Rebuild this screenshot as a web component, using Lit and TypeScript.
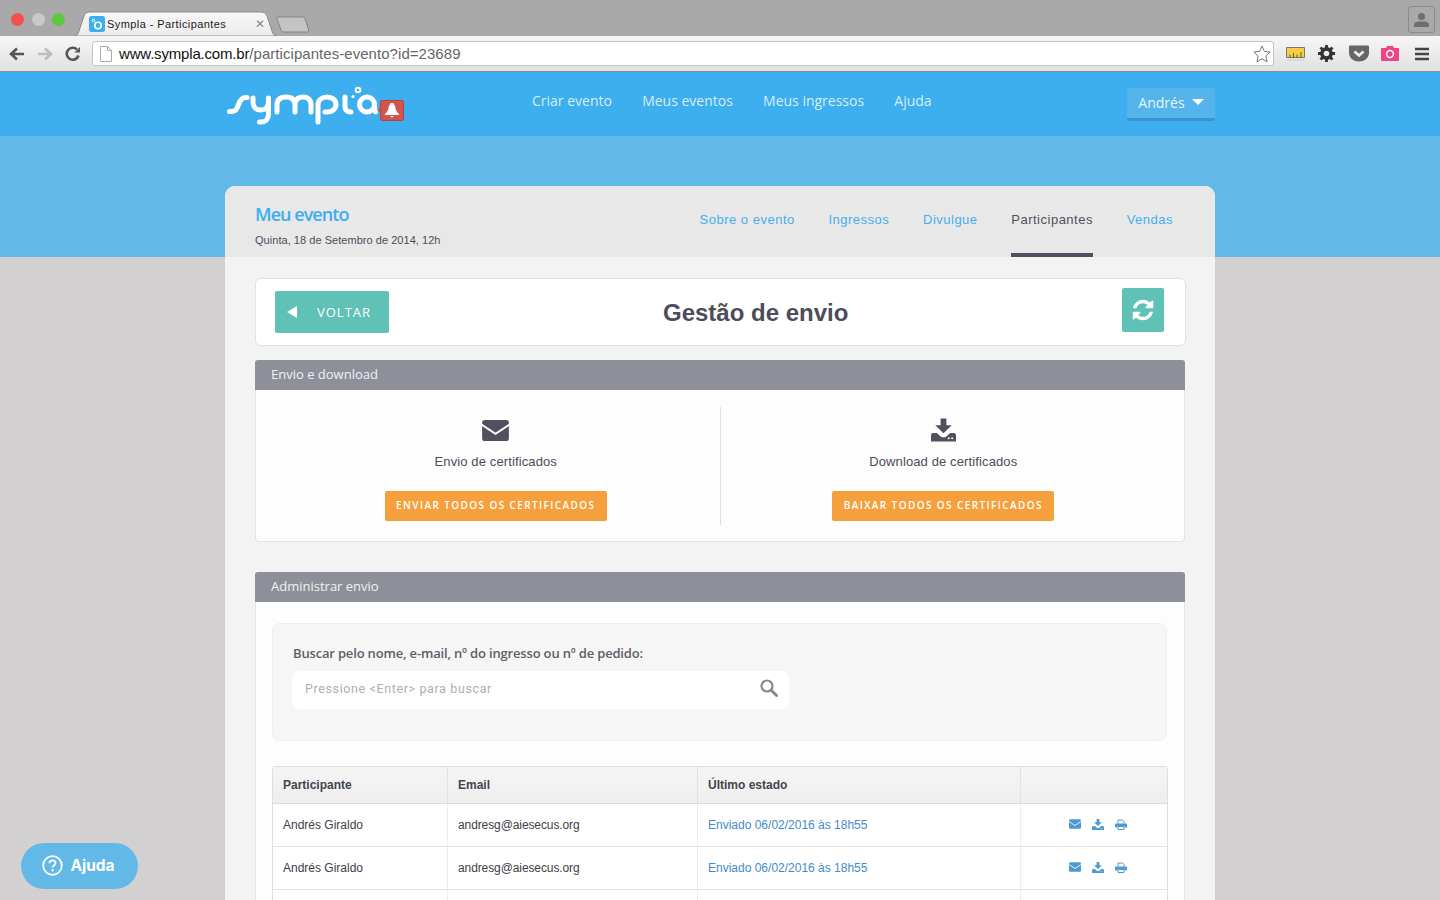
import { LitElement, html, css } from "lit";
import { customElement } from "lit/decorators.js";

const refreshD = "M1639 1056q0 5-1 7-64 268-268 434.5t-478 166.5q-146 0-282.5-55t-243.5-157l-129 129q-19 19-45 19t-45-19-19-45v-448q0-26 19-45t45-19h448q26 0 45 19t19 45-19 45l-137 137q71 66 161 102t187 36q134 0 250-65t186-179q11-17 53-117 8-23 30-23h192q13 0 22.5 9.5t9.5 22.5zm25-800v448q0 26-19 45t-45 19h-448q-26 0-45-19t-19-45 19-45l138-138q-148-137-349-137-134 0-250 65t-186 179q-11 17-53 117-8 23-30 23h-199q-13 0-22.5-9.5t-9.5-22.5v-7q65-268 270-434.5t480-166.5q146 0 284 55.5t245 156.5l130-129q19-19 45-19t45 19 19 45z";

const mail = (w: number, h: number, c: string) => html`<svg width=${w} height=${h} viewBox="0 0 28 22" aria-hidden="true">
  <rect x="0" y="0" width="28" height="22" rx="3" fill=${c}></rect>
  <path d="M-1 4.500 L14 14.500 L29 4.500" fill="none" stroke="#fff" stroke-width="2"></path></svg>`;

const download = (w: number, h: number, c: string) => html`<svg width=${w} height=${h} viewBox="0 0 26 24" aria-hidden="true">
  <path d="M10 0h6v7h5.500L13 15.500 4.500 7H10z" fill=${c}></path>
  <path d="M0 17.500q0-2 2-2.500h4l5 4.500h4l5-4.500h4q2 .5 2 2.500V24H0z" fill=${c}></path>
  <circle cx="18.500" cy="20.500" r="1" fill="#fff"></circle><circle cx="22" cy="20.500" r="1" fill="#fff"></circle></svg>`;

const printer = (w: number, h: number, c: string) => html`<svg width=${w} height=${h} viewBox="0 0 24 22" aria-hidden="true">
  <path d="M6 9V2h9l3 3v4" fill="none" stroke=${c} stroke-width="2"></path>
  <path d="M2 9h20q2 0 2 2v6h-5v-3H5v3H0v-6q0-2 2-2z" fill=${c}></path>
  <path d="M6 15h12v6H6z" fill="none" stroke=${c} stroke-width="2"></path></svg>`;

@customElement("browser-chrome")
class BrowserChrome extends LitElement {
  static styles = css`
    :host { display: block; font-family: "Liberation Sans", sans-serif; }
    .strip { height: 36px; background: #a9a9a9; display: flex; align-items: flex-end; position: relative; }
    .lights { position: absolute; left: 11px; top: 12.500px; display: flex; gap: 7.500px; }
    .light { width: 13px; height: 13px; border-radius: 50%; }
    .red { background: #f2504c; } .grey { background: #c9c9c9; } .green { background: #5cc83f; }
    .tab { margin-left: 74px; width: 206px; height: 25px; position: relative; display: flex; align-items: center; padding-left: 15px; box-sizing: border-box; }
    .tab-bg { position: absolute; left: 0; top: 0; }
    .fav, .tab-title, .tab-x { position: relative; }
    .fav { width: 16px; height: 16px; margin-right: 2px; }
    .tab-title { font-size: 11px; letter-spacing: .42px; color: #1b1b1b; width: 148px; white-space: nowrap; }
    .tab-x { font-size: 12px; color: #8a8a8a; line-height: 1; }
    .newtab { margin-left: -4px; margin-bottom: 3px; }
    .profile { position: absolute; right: 5px; top: 6px; width: 25px; height: 25px; border: 1px solid #8b8b8b; border-radius: 3px; display: flex; align-items: center; justify-content: center; }
    .bar { height: 35px; background: linear-gradient(#f6f6f6, #e1e1e1); border-bottom: 1px solid #8e8e8e; display: flex; align-items: center; box-sizing: content-box; }
    .navs { width: 92px; display: flex; flex: none; gap: 12px; padding-left: 9px; box-sizing: border-box; align-items: center; }
    .addr { flex: none; width: 1182px; height: 25px; box-sizing: border-box; background: #fff; border: 1px solid #c4c4c4; border-radius: 3px; display: flex; align-items: center; padding: 0 2px 0 7px; }
    .url { margin-left: 7px; flex: 1; font-size: 15px; letter-spacing: .05px; color: #666; white-space: nowrap; }
    .url b { font-weight: 400; color: #111; letter-spacing: -.18px; }
    .exts { display: flex; align-items: center; margin-left: 11.500px; gap: 12.500px; }
    .menu { margin-left: 3px; }
  `;
  render() {
    return html`
      <div class="strip">
        <div class="lights"><i class="light red"></i><i class="light grey"></i><i class="light green"></i></div>
        <div class="tab">
          <svg class="tab-bg" width="206" height="25" viewBox="0 0 206 25" aria-hidden="true">
            <defs><linearGradient id="tg" x1="0" y1="0" x2="0" y2="1"><stop offset="0" stop-color="#f8f8f8"/><stop offset="1" stop-color="#ececec"/></linearGradient></defs>
            <path d="M0 25c3 0 4-2 5-5l5-15c1-3 3-4 6-4h171c3 0 5 1 6 4l5 15c1 3 2 5 5 5z" fill="url(#tg)" stroke="#8c8c8c" stroke-width="1"></path>
          </svg>
          <svg class="fav" viewBox="0 0 16 16" aria-hidden="true">
            <rect width="16" height="16" rx="2.500" fill="#3daeee"></rect>
            <circle cx="9" cy="9.500" r="3.200" fill="none" stroke="#fff" stroke-width="1.600"></circle>
            <circle cx="4.500" cy="4.500" r="1.300" fill="none" stroke="#fff" stroke-width="1"></circle>
          </svg>
          <span class="tab-title">Sympla - Participantes</span>
          <span class="tab-x">✕</span>
        </div>
        <svg class="newtab" width="34" height="17" viewBox="0 0 34 17" aria-hidden="true">
          <path d="M2 1h24c1.500 0 2.500.5 3 2l3.500 10c.5 1.500 0 3-2 3H8c-1.500 0-2.500-.5-3-2L1 3C.5 1.500 1 1 2 1z" fill="#c4c4c4" stroke="#838383"></path>
        </svg>
        <div class="profile">
          <svg width="15" height="14" viewBox="0 0 15 14" aria-hidden="true"><circle cx="7.500" cy="3.500" r="3.500" fill="#6e6e6e"></circle><path d="M0 14v-2q0-3 4-3.500h7q4 .5 4 3.500v2z" fill="#6e6e6e"></path></svg>
        </div>
      </div>
      <div class="bar">
        <div class="navs">
          <svg width="16" height="14" viewBox="0 0 16 14" aria-hidden="true"><path d="M15 7H3M8 1.500 2 7l6 5.500" fill="none" stroke="#555" stroke-width="2.600"></path></svg>
          <svg width="16" height="14" viewBox="0 0 16 14" aria-hidden="true"><path d="M1 7h12M8 1.500 14 7l-6 5.500" fill="none" stroke="#bcbcbc" stroke-width="2.600"></path></svg>
          <svg width="16" height="16" viewBox="0 0 16 16" aria-hidden="true"><path d="M13.500 9.500A6 6 0 1 1 12 3.500" fill="none" stroke="#555" stroke-width="2.600"></path><path d="M9.500 6.500H15V1z" fill="#555"></path></svg>
        </div>
        <div class="addr">
          <svg width="12" height="16" viewBox="0 0 12 16" aria-hidden="true"><path d="M.5.500h7l4 4v11H.5z" fill="#fff" stroke="#aaa"></path><path d="M7.500.500v4h4" fill="none" stroke="#aaa"></path></svg>
          <span class="url"><b>www.sympla.com.br</b>/participantes-evento?id=23689</span>
          <svg width="18" height="18" viewBox="0 0 18 18" aria-hidden="true"><path d="M9 1l2.400 5.400 5.800.6-4.300 3.900 1.200 5.800L9 13.800l-5.100 2.900 1.200-5.800L.8 7l5.800-.6z" fill="#fff" stroke="#777" stroke-width="1"></path></svg>
        </div>
        <div class="exts">
          <svg width="19" height="14" viewBox="0 0 19 14" aria-hidden="true"><path d="M.5.500h18v10H.5z" fill="#f7cf45" stroke="#777"></path><path d="M4 11V7.500M7.500 11V6M11 11V7.500M15 11V5" stroke="#6b5a20" stroke-width="1"></path><path d="M1 13h17" stroke="#ccc"></path></svg>
          <svg width="19" height="19" viewBox="0 0 19 19" aria-hidden="true"><circle cx="9.500" cy="9.500" r="4.600" fill="none" stroke="#333" stroke-width="3.600"></circle><path d="M9.500 1v17M1 9.500h17M3.500 3.500l12 12M15.500 3.500l-12 12" stroke="#333" stroke-width="2.800" stroke-dasharray="3 11 3 3"></path></svg>
          <svg width="20" height="17" viewBox="0 0 20 17" aria-hidden="true"><path d="M1 .5h18q1 0 1 1V8c0 5-5 8.500-10 8.500S0 13 0 8V1.500q0-1 1-1z" fill="#666"></path><path d="M5.500 6.500 10 10.500l4.500-4" fill="none" stroke="#eee" stroke-width="2.600"></path></svg>
          <svg width="18" height="15" viewBox="0 0 18 15" aria-hidden="true"><path d="M0 2h5l1-2h6l1 2h5v13H0z" fill="#f04488"></path><circle cx="9" cy="8" r="3.400" fill="none" stroke="#fff" stroke-width="1.500"></circle></svg>
          <svg class="menu" width="14" height="14" viewBox="0 0 14 14" aria-hidden="true"><path d="M0 2h14M0 7h14M0 12h14" stroke="#444" stroke-width="2.500"></path></svg>
        </div>
      </div>`;
  }
}

@customElement("app-root")
export class AppRoot extends LitElement {
  static styles = css`
    :host { display: block; height: 900px; overflow: hidden; position: relative; background: #d2d0d1; font-family: "Liberation Sans", sans-serif; color: #4c4c5a; }
    .topbar { height: 64px; background: #3daeee; }
    .wrap { width: 990px; margin: 0 auto; }
    .topin { display: flex; height: 64px; position: relative; }
    .logo { flex: none; width: 180px; margin-left: 1px; margin-top: 14px; height: 42px; }
    .links { display: flex; gap: 30.200px; margin-left: 126px; padding-top: 19px; font: 14px "Open Sans", sans-serif; color: #d4edfb; }
    .user { margin-left: auto; margin-top: 16px; width: 88px; height: 33px; box-sizing: border-box; background: #55b4eb; border-bottom: 3px solid #3a95cd; border-radius: 3px; display: flex; align-items: center; justify-content: center; gap: 7px; padding-bottom: 2px; font: 14px "Open Sans", sans-serif; color: #e6f4fc; }
    .caret { width: 0; height: 0; border-left: 6px solid transparent; border-right: 6px solid transparent; border-top: 6px solid #fff; }
    .band { height: 121px; background: #62b9e8; }
    .card { margin-top: -71px; position: relative; background: #f3f3f3; border-radius: 10px 10px 0 0; overflow: hidden; height: 714px; }
    .chead { height: 71px; background: #e8e8e9; display: flex; justify-content: space-between; padding: 0 42px 0 30px; }
    .etitle { font: 600 18px/1 "Open Sans", sans-serif; letter-spacing: -.95px; color: #3daeee; margin-top: 19px; }
    .edate { font-size: 11px; letter-spacing: .04px; color: #4c4c5a; margin-top: 11px; }
    .tabs { display: flex; gap: 33.700px; font-size: 13px; letter-spacing: .5px; color: #46aeee; }
    .t { height: 71px; box-sizing: border-box; padding-top: 26px; }
    .t.on { color: #50505e; border-bottom: 4px solid #50505e; }
    .cbody { padding: 21px 30px 0 30px; }
    .titlebox { height: 68px; box-sizing: border-box; background: #fff; border: 1px solid #e2e2e2; border-radius: 6px; display: flex; align-items: center; padding: 0 21px 0 19px; margin-right: -1px; }
    .back { flex: none; width: 114px; height: 42px; background: #60c1b6; border-radius: 2px; display: flex; align-items: center; box-sizing: border-box; padding-left: 12px; font: 13px "Open Sans", sans-serif; letter-spacing: 1px; color: #fff; }
    .back i { width: 0; height: 0; border-top: 6px solid transparent; border-bottom: 6px solid transparent; border-right: 10px solid #fff; margin-right: 20px; }
    h1 { margin: 2px 0 0 274px; font-size: 24px; font-weight: 700; color: #4c4c5a; }
    .refresh { margin-left: auto; margin-bottom: 4px; width: 42px; height: 44px; background: #60c1b6; border-radius: 2px; display: flex; align-items: center; justify-content: center; }
    .phead { height: 30px; background: #8e9099; border-radius: 3px 3px 0 0; padding-left: 16px; font: 13px/29px "Open Sans", sans-serif; color: #f0f0f2; }
    .p1 { margin-top: 14px; }
    .p2 { margin-top: 30px; }
    .pbody { background: #fdfdfd; border: 1px solid #e2e2e2; border-top: 0; }
    .p1 .pbody { height: 152px; box-sizing: border-box; border-radius: 0 0 4px 4px; display: grid; grid-template-columns: 1fr 1px 1fr; padding: 17px 0; }
    .div { background: #e0e0e0; }
    .col { display: flex; flex-direction: column; align-items: center; height: 118px; }
    .col.l { padding-left: 16px; }
    .col.r { padding-right: 18px; }
    .ico { height: 30px; display: flex; align-items: center; margin-top: 8px; }
    .col p { margin: 9px 0 0; font-size: 13px; height: 15px; line-height: 15px; letter-spacing: .12px; color: #4c4c5a; }
    .cta { margin-top: 22px; height: 30px; padding: 0 11.500px; background: #f6a03d; border-radius: 2px; font: 600 10px/28.500px "Open Sans", sans-serif; letter-spacing: 1.400px; color: #fff; white-space: nowrap; }
    .p2 .pbody { padding: 21px 17px 0 16px; height: 400px; box-sizing: border-box; }
    .search { height: 118px; box-sizing: border-box; background: #f6f6f6; border: 1px solid #efefef; border-radius: 8px; padding: 20px 20px 0; }
    .lbl { font: 600 13px/18px "Open Sans", sans-serif; letter-spacing: -.17px; color: #5e5e68; }
    .inp { margin: 9px 0 0 -1px; width: 497px; height: 38px; background: #fff; border-radius: 8px; display: flex; align-items: center; justify-content: space-between; box-sizing: border-box; padding: 0 11px 4px 13px; font-size: 12.500px; letter-spacing: .62px; color: #aeaeae; font-family: "Roboto", sans-serif; }
    table { margin-top: 25px; width: 896px; border-collapse: separate; border-spacing: 0; table-layout: fixed; border: 1px solid #dedede; border-radius: 3px 3px 0 0; font-size: 12px; color: #3e3e48; }
    th { height: 36px; text-align: left; font-weight: 700; padding: 0 10px; background: linear-gradient(#f5f5f5, #eeeeee); border-bottom: 1px solid #dedede; border-right: 1px solid #e2e2e2; color: #44444f; }
    td { height: 42px; padding: 0 10px; border-bottom: 1px solid #e4e4e4; border-right: 1px solid #ececec; background: #fff; white-space: nowrap; }
    th:last-child, td:last-child { border-right: 0; }
    td.em { letter-spacing: -.1px; }
    td.st { color: #428bca; }
    .acts { display: flex; justify-content: center; align-items: center; gap: 11px; padding: 0 0 2px 8px; }
    .help { position: absolute; left: 21px; top: 843px; width: 117px; height: 46px; box-sizing: border-box; padding-bottom: 1px; border-radius: 23px; background: #62b9e8; display: flex; align-items: center; justify-content: center; gap: 7px; color: #fff; font: 700 15.500px "Inter", sans-serif; }
    .help svg { margin-left: -2px; }
  `;

  logo() {
    return html`<svg class="logo" viewBox="226 86 180 42" aria-hidden="true">
      <g fill="none" stroke="#fff" stroke-width="5" stroke-linecap="round" stroke-linejoin="round">
        <path d="M229.500 111.500h2.500c4 0 5-3 6.500-7s3-7 7-7h1.500"></path>
        <path d="M253 98v4c0 5 3 8 7.500 8s8-3 8-8v-4M268.500 102v12c0 5-3 8-7 8h-2"></path>
        <path d="M277 112v-7c0-5 3-8 9-8s9 3 9 8v7M295 105c0-5 3-8 8-8s8 3 8 8v7"></path>
        <path d="M318 122v-17c0-5 4-8 9-8s9 3 9 7.500-4 7.500-9 7.500h-2"></path>
        <path d="M345 97v9c0 4 2 6 6 6"></path>
        <circle cx="367" cy="104.500" r="7.500"></circle>
        <path d="M374.500 105c0 4 .5 7 1 7"></path>
      </g>
      <circle cx="358" cy="90" r="2.300" fill="none" stroke="#fff" stroke-width="2"></circle>
      <circle cx="353" cy="96.500" r="1.600" fill="#fff"></circle>
      <path d="M380.500 107l-3 3 3 3z" fill="#d25450"></path>
      <rect x="380.500" y="100.500" width="23" height="20" rx="1.500" fill="#d25450" stroke="#b8443f"></rect>
      <path d="M392 103c-2 0-3 2-3.500 5s-1.500 4.500-3.500 6v1h14v-1c-2-1.500-3-3-3.500-6s-1.500-5-3.500-5zM390 116h4l-2 1.500z" fill="#fff"></path>
    </svg>`;
  }

  row(filled = true) {
    return html`<tr>
      <td>${filled ? "Andrés Giraldo" : ""}</td><td class="em">${filled ? "andresg@aiesecus.org" : ""}</td>
      <td class="st">${filled ? "Enviado 06/02/2016 às 18h55" : ""}</td>
      <td>${filled ? html`<div class="acts">${mail(12, 10, "#4a9ad4")}${download(12, 11, "#4a9ad4")}${printer(12, 11, "#4a9ad4")}</div>` : ""}</td>
    </tr>`;
  }

  render() {
    return html`
      <browser-chrome></browser-chrome>
      <div class="topbar"><div class="wrap topin">
        ${this.logo()}
        <div class="links"><span>Criar evento</span><span>Meus eventos</span><span>Meus ingressos</span><span>Ajuda</span></div>
        <div class="user">Andrés <i class="caret"></i></div>
      </div></div>
      <div class="band"></div>
      <div class="wrap card">
        <div class="chead">
          <div>
            <div class="etitle">Meu evento</div>
            <div class="edate">Quinta, 18 de Setembro de 2014, 12h</div>
          </div>
          <div class="tabs">
            <div class="t">Sobre o evento</div><div class="t">Ingressos</div><div class="t">Divulgue</div><div class="t on">Participantes</div><div class="t">Vendas</div>
          </div>
        </div>
        <div class="cbody">
          <div class="titlebox">
            <div class="back"><i></i>VOLTAR</div>
            <h1>Gestão de envio</h1>
            <div class="refresh"><svg width="24" height="24" viewBox="0 0 1792 1792" aria-hidden="true"><path d=${refreshD} fill="#fff"></path></svg></div>
          </div>
          <section class="p1">
            <div class="phead">Envio e download</div>
            <div class="pbody">
              <div class="col l"><div class="ico">${mail(27, 21, "#50505e")}</div><p>Envio de certificados</p><div class="cta">ENVIAR TODOS OS CERTIFICADOS</div></div>
              <div class="div"></div>
              <div class="col r"><div class="ico">${download(25, 24, "#50505e")}</div><p>Download de certificados</p><div class="cta">BAIXAR TODOS OS CERTIFICADOS</div></div>
            </div>
          </section>
          <section class="p2">
            <div class="phead">Administrar envio</div>
            <div class="pbody">
              <div class="search">
                <div class="lbl">Buscar pelo nome, e-mail, nº do ingresso ou nº de pedido:</div>
                <div class="inp"><span>Pressione &lt;Enter&gt; para buscar</span>
                  <svg width="18" height="18" viewBox="0 0 18 18" aria-hidden="true"><circle cx="7" cy="7" r="5.500" fill="none" stroke="#8a8a8a" stroke-width="2.200"></circle><path d="M11 11l5.500 5.500" stroke="#8a8a8a" stroke-width="3" stroke-linecap="round"></path></svg>
                </div>
              </div>
              <table>
                <colgroup><col style="width:175px"><col style="width:250px"><col style="width:323px"><col></colgroup>
                <thead><tr><th>Participante</th><th>Email</th><th>Último estado</th><th></th></tr></thead>
                <tbody>${this.row()}${this.row()}${this.row(false)}</tbody>
              </table>
            </div>
          </section>
        </div>
      </div>
      <div class="help">
        <svg width="21" height="21" viewBox="0 0 21 21" aria-hidden="true"><circle cx="10.500" cy="10.500" r="9.300" fill="none" stroke="#fff" stroke-width="1.800"></circle><path d="M7.500 8.200c0-1.800 1.300-2.800 3-2.800s3 1 3 2.600c0 2.400-3 2.400-3 4.600" fill="none" stroke="#fff" stroke-width="1.800"></path><circle cx="10.500" cy="15.300" r="1.200" fill="#fff"></circle></svg>
        Ajuda
      </div>`;
  }
}
